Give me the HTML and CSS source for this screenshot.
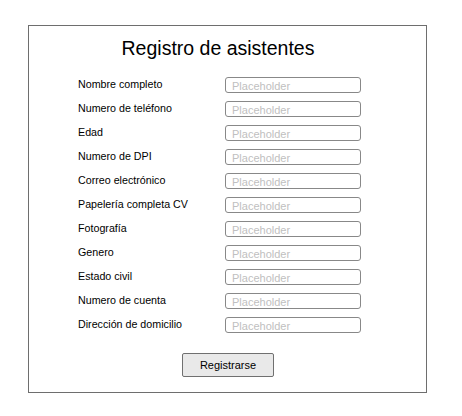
FILE: index.html
```html
<!DOCTYPE html>
<html lang="es">
<head>
<meta charset="utf-8">
<link rel="stylesheet" href="styles.css">
</head>
<body>
<div class="card">
  <h1 class="title">Registro de asistentes</h1>
  <form class="form">
    <div class="row"><label>Nombre completo</label><input placeholder="Placeholder"></div>
    <div class="row"><label>Numero de teléfono</label><input placeholder="Placeholder"></div>
    <div class="row"><label>Edad</label><input placeholder="Placeholder"></div>
    <div class="row"><label>Numero de DPI</label><input placeholder="Placeholder"></div>
    <div class="row"><label>Correo electrónico</label><input placeholder="Placeholder"></div>
    <div class="row"><label>Papelería completa CV</label><input placeholder="Placeholder"></div>
    <div class="row"><label>Fotografía</label><input placeholder="Placeholder"></div>
    <div class="row"><label>Genero</label><input placeholder="Placeholder"></div>
    <div class="row"><label>Estado civil</label><input placeholder="Placeholder"></div>
    <div class="row"><label>Numero de cuenta</label><input placeholder="Placeholder"></div>
    <div class="row"><label>Dirección de domicilio</label><input placeholder="Placeholder"></div>
    <div class="actions"><button type="button" class="btn">Registrarse</button></div>
  </form>
</div>
</body>
</html>
```
FILE: styles.css
```css
html, body {
  margin: 0;
  padding: 0;
  background: #ffffff;
}
body {
  font-family: "Liberation Sans", Arial, sans-serif;
  color: #000;
}
.card {
  box-sizing: border-box;
  margin: 25px 0 0 28px;
  width: 399px;
  height: 368px;
  border: 1px solid #6e6e6e;
  padding-top: 10px;
}
.title {
  margin: 0;
  width: 378px;
  text-align: center;
  font-weight: normal;
  font-size: 19.5px;
  line-height: 24px;
}
.form {
  margin-top: 13px;
  padding-left: 49px;
}
.row {
  display: flex;
  align-items: center;
  height: 24px;
}
.row label {
  width: 147px;
  font-size: 10.7px;
  line-height: 14px;
  position: relative;
  top: -1px;
}
.row input {
  box-sizing: border-box;
  width: 136px;
  height: 16px;
  border: 1px solid #888;
  border-radius: 3px;
  padding: 2px 6px 0;
  font-family: "Liberation Sans", Arial, sans-serif;
  font-size: 11px;
  outline: none;
  margin: 0;
}
.row input::placeholder {
  color: #c0c0c0;
}
.actions {
  display: flex;
  padding-left: 104px;
  margin-top: 16px;
}
.btn {
  box-sizing: border-box;
  width: 92px;
  height: 24px;
  background: #e9e9e9;
  border: 1px solid #707070;
  border-radius: 2px;
  font-family: "Liberation Sans", Arial, sans-serif;
  font-size: 11px;
  color: #000;
  padding: 0;
}
```
